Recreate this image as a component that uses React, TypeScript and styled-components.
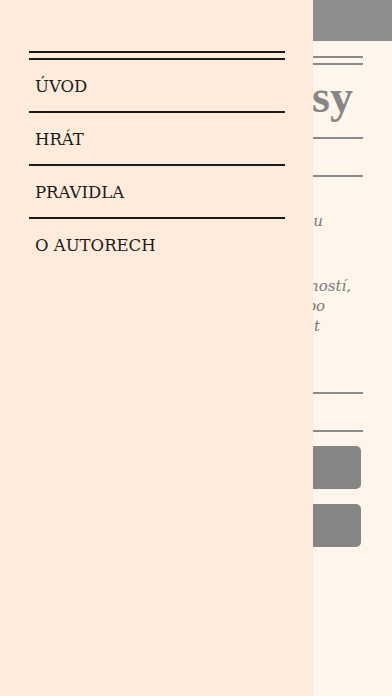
import React from 'react'
import styled, { createGlobalStyle } from 'styled-components'

const GlobalStyle = createGlobalStyle`
  html, body {
    margin: 0;
    padding: 0;
    background: #fff5eb;
  }
  * {
    box-sizing: border-box;
  }
`

const Screen = styled.div`
  position: relative;
  width: 392px;
  height: 696px;
  overflow: hidden;
  background: #fff5eb;
  font-family: 'DejaVu Serif', serif;
`

const TopBar = styled.div`
  height: 41px;
  background: #8e8e8e;
`

const Content = styled.div`
  display: flex;
  flex-direction: column;
  padding: 0 29px;
`

const DoubleRule = styled.div<{ $color: string; $top: number }>`
  height: 9px;
  margin-top: ${p => p.$top}px;
  border-top: 2px solid ${p => p.$color};
  border-bottom: 2px solid ${p => p.$color};
`

const Rule = styled.div<{ $top: number }>`
  height: 2px;
  margin-top: ${p => p.$top}px;
  background: #8a8a8a;
`

const Title = styled.h1`
  margin: 8px 0 0;
  padding-right: 10px;
  height: 48px;
  font-family: 'Liberation Serif', serif;
  font-size: 46px;
  font-weight: 700;
  line-height: 48px;
  text-align: right;
  color: #878787;
  white-space: nowrap;
`

const Paragraph = styled.p<{ $top: number }>`
  margin: ${p => p.$top}px 0 0;
  font-style: italic;
  font-size: 15px;
  line-height: 20px;
  color: #7a7a7a;
`

const TextLine = styled.span<{ $cut: number }>`
  display: block;
  padding-right: ${p => p.$cut}px;
  text-align: right;
  white-space: nowrap;
  overflow: hidden;
`

const GrayButton = styled.button<{ $top: number }>`
  height: 43px;
  margin: ${p => p.$top}px 2px 0 0;
  border: none;
  border-radius: 5px;
  background: #858585;
  color: #fff5eb;
  font-family: 'DejaVu Serif', serif;
  font-size: 16px;
`

const Drawer = styled.nav`
  position: absolute;
  top: 0;
  left: 0;
  bottom: 0;
  width: 313px;
  padding: 51px 28px 0 29px;
  background: #ffebdb;
`

const Menu = styled.ul`
  list-style: none;
  margin: 0;
  padding: 0;
`

const MenuItem = styled.li<{ $last?: boolean }>`
  height: ${p => (p.$last ? 51 : 53)}px;
  padding: 17px 0 0 6px;
  border-bottom: ${p => (p.$last ? 'none' : '2px solid #1a1a1a')};
  font-size: 16.5px;
  line-height: 20px;
  color: #1a1a1a;
  text-transform: uppercase;
`

const items = ['Úvod', 'Hrát', 'Pravidla', 'O autorech']

export default function App() {
  return (
    <>
      <GlobalStyle />
      <Screen>
        <TopBar />
        <Content>
          <DoubleRule $color="#8a8a8a" $top={15} />
          <Title>Kosy</Title>
          <Rule $top={16} />
          <Rule $top={36} />
          <Paragraph $top={34}>
            <TextLine $cut={40}>si zahrají s kostkou</TextLine>
          </Paragraph>
          <Paragraph $top={25}>
            <TextLine $cut={90}>Vyhrává,</TextLine>
            <TextLine $cut={12}>kdo s dovedností,</TextLine>
            <TextLine $cut={38}>dojde po</TextLine>
            <TextLine $cut={43}>a vyhraje hrát</TextLine>
          </Paragraph>
          <Rule $top={56} />
          <Rule $top={36} />
          <GrayButton $top={14}>Hrát</GrayButton>
          <GrayButton $top={15}>Pravidla</GrayButton>
        </Content>
        <Drawer>
          <DoubleRule $color="#1a1a1a" $top={0} />
          <Menu>
            {items.map((label, i) => (
              <MenuItem key={label} $last={i === items.length - 1}>
                {label}
              </MenuItem>
            ))}
          </Menu>
        </Drawer>
      </Screen>
    </>
  )
}
